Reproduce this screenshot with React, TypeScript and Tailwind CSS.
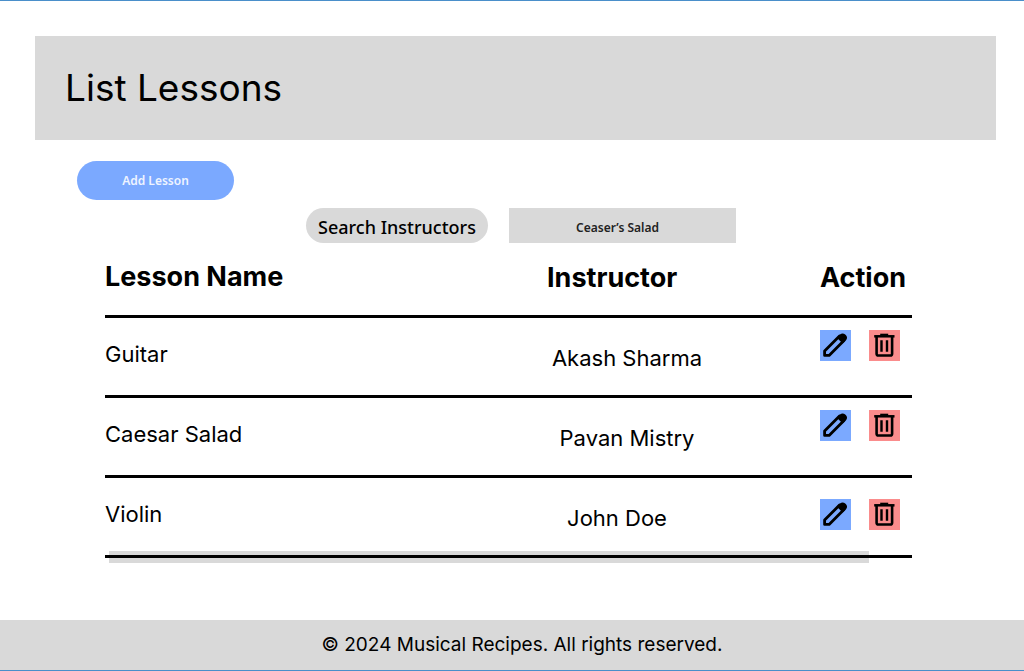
type Lesson = {
  name: string;
  instructor: string;
};

const lessons: Lesson[] = [
  { name: 'Guitar', instructor: 'Akash Sharma' },
  { name: 'Caesar Salad', instructor: 'Pavan Mistry' },
  { name: 'Violin', instructor: 'John Doe' },
];

function PencilIcon() {
  return (
    <svg viewBox="0 0 31 31" className="size-full" fill="none" aria-hidden="true">
      <path
        d="M4.600 25.400v-4.400L19.500 6.100l4.500 4.500L9.100 25.400z"
        stroke="#000"
        strokeWidth="2.800"
        strokeLinejoin="round"
      />
      <path
        d="M16.800 7.700l3.200-3.200c1.500-1.400 3.800-1.400 5.200 0l.8.8c1.400 1.400 1.400 3.600 0 5l-3.300 3.300z"
        fill="#000"
      />
    </svg>
  );
}

function TrashIcon() {
  return (
    <svg viewBox="0 0 31 31" className="size-full" fill="none" stroke="#000" aria-hidden="true">
      <path d="M5.200 6.300h20.300" strokeWidth="2.500" />
      <path d="M11.200 4.700h8" strokeWidth="2" />
      <path d="M7.600 7v16.700c0 1.100.7 1.800 1.800 1.800h11.900c1.100 0 1.800-.7 1.800-1.800V7" strokeWidth="2.600" />
      <path d="M12.500 10.300v11.400M18 10.300v11.400" strokeWidth="2.400" />
    </svg>
  );
}

function LessonRow({ lesson }: { lesson: Lesson }) {
  return (
    <tr className="group h-20 border-b-3 border-black align-top text-[22px] leading-7">
      <td className="pt-[22px]">{lesson.name}</td>
      <td className="pt-[26px] pr-[113px] text-center whitespace-nowrap group-last:pr-[133px]">
        {lesson.instructor}
      </td>
      <td className="pt-3 group-last:pt-[21px]">
        <div className="flex gap-[18px]">
          <button
            type="button"
            aria-label={`Edit ${lesson.name}`}
            className="size-[31px] cursor-pointer bg-[#7ba9ff]"
          >
            <PencilIcon />
          </button>
          <button
            type="button"
            aria-label={`Delete ${lesson.name}`}
            className="size-[31px] cursor-pointer bg-[#fa8c8c]"
          >
            <TrashIcon />
          </button>
        </div>
      </td>
    </tr>
  );
}

export default function App() {
  return (
    <div className="flex min-h-screen flex-col border-y border-[#4a8fca] bg-white font-['Inter',sans-serif] text-black">
      <header className="mt-[35px] mr-7 ml-[35px] flex h-[104px] items-center bg-[#d9d9d9] px-[30px]">
        <h1 className="text-[37px] leading-[48px]">List Lessons</h1>
      </header>

      <main className="flex-1 pb-10">
        <div className="mt-[21px] ml-[77px]">
          <button
            type="button"
            className="block h-[39px] w-[157px] cursor-pointer rounded-full bg-[#7ba9ff] font-['Noto_Sans',sans-serif] text-xs font-semibold text-[#eef4ff]"
          >
            Add Lesson
          </button>
        </div>

        <form className="mt-2 flex justify-center gap-[21px] pl-[18px] font-['Noto_Sans',sans-serif]">
          <button
            type="submit"
            className="h-[35px] w-[182px] cursor-pointer rounded-full bg-[#d9d9d9] pt-0.5 text-lg leading-6 font-medium whitespace-nowrap"
          >
            Search Instructors
          </button>
          <input
            type="text"
            aria-label="Instructor search"
            defaultValue="Ceaser’s Salad"
            className="h-[35px] w-[227px] bg-[#d9d9d9] px-3 pt-1 pr-[22px] text-center text-xs font-semibold text-[#222]"
          />
        </form>

        <div className="relative isolate mr-28 ml-[105px]">
          {/* track that sits behind the last rule */}
          <div className="absolute right-[43px] -bottom-[5px] left-1 -z-10 h-3 bg-[#d9d9d9]" />
          <table className="w-full table-fixed border-collapse">
            <thead>
              <tr className="h-[73px] border-b-3 border-black text-left align-top text-[27px] leading-8">
                <th scope="col" className="pt-[18px] font-bold">Lesson Name</th>
                <th scope="col" className="w-[273px] pt-[19px] font-bold">Instructor</th>
                <th scope="col" className="w-[92px] pt-[19px] font-bold">Action</th>
              </tr>
            </thead>
            <tbody>
              {lessons.map((lesson) => (
                <LessonRow key={lesson.name} lesson={lesson} />
              ))}
            </tbody>
          </table>
        </div>
      </main>

      <footer className="flex h-[50px] items-center justify-center bg-[#d9d9d9] pl-5 text-[19px]">
        © 2024 Musical Recipes. All rights reserved.
      </footer>
    </div>
  );
}
